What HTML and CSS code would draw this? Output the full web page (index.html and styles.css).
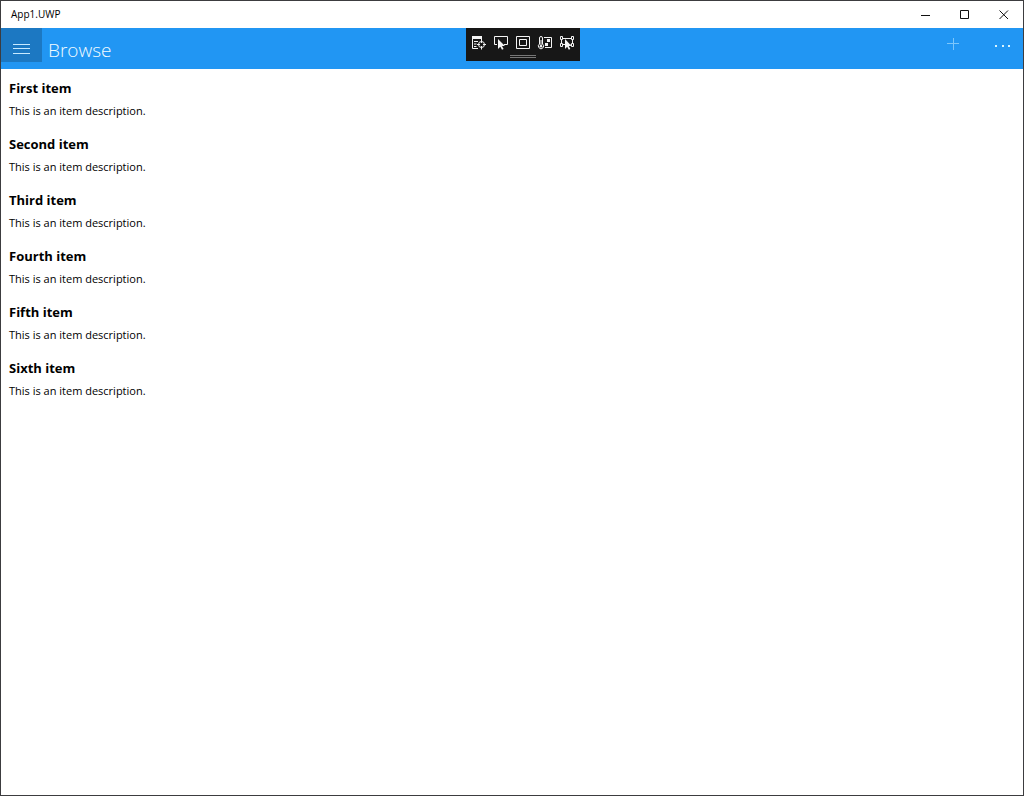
FILE: index.html
```html
<!DOCTYPE html>
<html lang="en">

<head>
    <meta charset="UTF-8">
    <meta name="viewport" content="width=device-width, initial-scale=1.0">
    <title>App1.UWP</title>
    <link rel="stylesheet" href="styles.css">
</head>

<body>

    <div class="window">
        <!-- Title bar -->
        <div class="title-bar">
            <span class="app-name">App1.UWP</span>
            <div class="window-buttons">
                <button type="button" aria-label="Minimize">
                    <svg width="10" height="10" viewBox="0 0 10 10"><path d="M0 5.5h9"/></svg>
                </button>
                <button type="button" aria-label="Maximize">
                    <svg width="10" height="10" viewBox="0 0 10 10"><path d="M.5 .5h8v8h-8z"/></svg>
                </button>
                <button type="button" aria-label="Close">
                    <svg width="10" height="10" viewBox="0 0 10 10"><path d="M.5.5l8.500 8.500M9 .5l-8.500 8.500"/></svg>
                </button>
            </div>
        </div>

        <!-- Page header -->
        <header class="header">
            <button type="button" class="menu-button" aria-label="Menu">
                <svg width="18" height="12" viewBox="0 0 18 12"><path d="M0 1.5h17M0 5.5h17M0 10.5h17"/></svg>
            </button>
            <h1>Browse</h1>
            <div class="commands">
                <button type="button" class="add-button" aria-label="Add">
                    <svg width="12" height="12" viewBox="0 0 12 12"><path d="M0 5.5h12M6.5 0v12"/></svg>
                </button>
                <button type="button" class="more-button" aria-label="More">
                    <svg width="16" height="4" viewBox="0 0 16 4"><path d="M0 1h2v2H0zM7 1h2v2H7zM13 1h2v2h-2z"/></svg>
                </button>
            </div>

            <!-- Debug toolbar, floats over the header -->
            <div class="debug-bar">
                <div class="debug-icons">
                    <button type="button" aria-label="Live visual tree">
                        <svg width="16" height="16" viewBox="0 0 16 16">
                            <path d="M7 13.5H1.500v-12h9V5M3 6.500h4M3 9h2.500M3 11.500h2.500"/>
                            <path class="solid" d="M1 1h10v3H1z"/>
                            <circle cx="10.500" cy="9.500" r="3"/>
                            <path d="M10.500 5v3M10.500 11v3.500M6 9.500h3M12 9.500h3"/>
                        </svg>
                    </button>
                    <button type="button" aria-label="Select element">
                        <svg width="16" height="16" viewBox="0 0 16 16">
                            <path d="M4 9.500H1.500v-8h13v8H11"/>
                            <path class="solid" d="M5 4v10l2.300-2.200 1.700 3 1.600-.9-1.600-2.900H12z"/>
                        </svg>
                    </button>
                    <button type="button" aria-label="Layout adorners">
                        <svg width="16" height="16" viewBox="0 0 16 16">
                            <path d="M1.500 1.500h13v12h-13zM4.500 4.500h7v6h-7z"/>
                        </svg>
                    </button>
                    <button type="button" aria-label="Runtime performance">
                        <svg width="16" height="16" viewBox="0 0 16 16">
                            <path d="M2.500 9V3a1.500 1.500 0 0 1 3 0v6a2.600 2.600 0 1 1-3 0zM4 5v6M7 2.500h7.500v10H8"/>
                            <circle class="solid" cx="4" cy="11.200" r="1.300"/>
                            <path class="solid" d="M10 4h3v3h-3zM8 8h3v3H8z"/>
                        </svg>
                    </button>
                    <button type="button" aria-label="Track focused element">
                        <svg width="16" height="16" viewBox="0 0 16 16">
                            <path d="M4 3.500h8M4 9.500h2M11.500 9.500h.5M2.500 5v3M13.500 5v3"/>
                            <path d="M1.500 1.500h2v3h-2zM12.500 1.500h2v3h-2zM1.500 8.500h2v3h-2zM12.500 8.500h2v3h-2z"/>
                            <path class="solid" d="M6 4v10l2.200-2.200 1.600 3 1.500-.9-1.500-2.900h2.700z"/>
                        </svg>
                    </button>
                </div>
                <div class="grip"></div>
            </div>
        </header>

        <!-- Item list -->
        <main>
            <ul class="items">
                <li>
                    <h2>First item</h2>
                    <p>This is an item description.</p>
                </li>
                <li>
                    <h2>Second item</h2>
                    <p>This is an item description.</p>
                </li>
                <li>
                    <h2>Third item</h2>
                    <p>This is an item description.</p>
                </li>
                <li>
                    <h2>Fourth item</h2>
                    <p>This is an item description.</p>
                </li>
                <li>
                    <h2>Fifth item</h2>
                    <p>This is an item description.</p>
                </li>
                <li>
                    <h2>Sixth item</h2>
                    <p>This is an item description.</p>
                </li>
            </ul>
        </main>
    </div>

</body>

</html>
```
FILE: styles.css
```css
* {
    box-sizing: border-box;
    margin: 0;
    padding: 0;
}

body {
    font-family: "Segoe UI", "Open Sans", sans-serif;
    background: #fff;
    color: #000;
}

button {
    display: flex;
    align-items: center;
    justify-content: center;
    border: none;
    background: none;
    cursor: pointer;
}

svg {
    display: block;
    fill: none;
    stroke: currentColor;
}

/* Window frame */
.window {
    min-height: 100vh;
    border: 1px solid #3c3c3f;
}

.title-bar {
    display: flex;
    justify-content: space-between;
    height: 27px;
    padding-left: 10px;
}

.app-name {
    font-size: 10px;
    line-height: 27px;
}

.window-buttons {
    display: flex;
}

.window-buttons button {
    width: 39px;
    color: #111;
}

/* Blue header */
.header {
    position: relative;
    display: flex;
    align-items: flex-start;
    height: 41px;
    background: #2196f3;
    color: #fff;
}

.menu-button {
    width: 41px;
    height: 34px;
    padding-top: 8px;
    background: #1c78c2;
    color: #c8eaff;
}

.header h1 {
    flex: 1;
    padding-left: 6px;
    font-size: 19px;
    font-weight: 300;
    line-height: 44px;
    color: #f2fbff;
}

.commands {
    display: flex;
}

.commands button {
    height: 32px;
}

.add-button {
    width: 58px;
    color: #7cc6fb;
}

.commands .more-button {
    width: 41px;
    height: 36px;
    color: #d8f4ff;
}

.more-button svg {
    fill: currentColor;
    stroke: none;
}

/* Debug toolbar */
.debug-bar {
    position: absolute;
    top: 0;
    left: 50%;
    width: 114px;
    height: 33px;
    margin-left: -46px;
    padding-top: 7px;
    background: #171717;
    color: #f4f4f4;
}

.debug-icons {
    display: flex;
    justify-content: center;
}

.debug-icons button {
    width: 22px;
    height: 16px;
    color: inherit;
}

.debug-icons .solid {
    fill: currentColor;
    stroke: none;
}

.grip {
    width: 26px;
    height: 3px;
    margin: 4px auto 0;
    border-top: 1px solid #777;
    border-bottom: 1px solid #777;
}

/* List of items */
.items {
    list-style: none;
}

.items li {
    height: 56px;
    padding: 8px;
}

.items h2 {
    font-size: 13px;
    line-height: 23px;
}

.items p {
    font-size: 11px;
    line-height: 22px;
}
```
